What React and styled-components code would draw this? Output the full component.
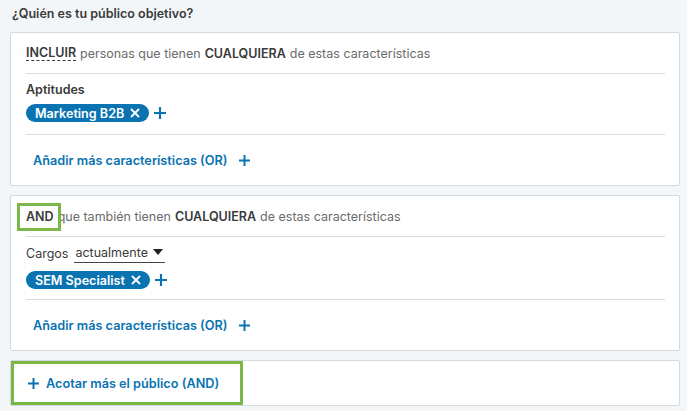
import React from "react";
import styled, { createGlobalStyle } from "styled-components";

const Global = createGlobalStyle`
  html, body { margin: 0; padding: 0; background: #f3f6f8; }
  body { font-family: Inter, "Liberation Sans", Arial, sans-serif; -webkit-font-smoothing: antialiased; }
`;

const Page = styled.div`
  width: 687px;
  height: 411px;
  box-sizing: border-box;
  padding: 6px 7px 0 10px;
  display: flex;
  flex-direction: column;
`;

const Title = styled.h2`
  margin: 0 0 10px 2px;
  font-size: 12.5px;
  font-weight: 600;
  color: #3a3a3a;
  line-height: 16px;
`;

const Card = styled.section`
  background: #fff;
  border: 1px solid #d6d9dc;
  border-radius: 2px;
  padding: ${(p) => p.$pad || "0 14px 0 15px"};
  margin-bottom: ${(p) => p.$mb || "9px"};
  display: flex;
  flex-direction: column;
`;

const Head = styled.div`
  height: 41px;
  display: flex;
  align-items: center;
  font-size: 12.5px;
  color: #6b6b6b;
  border-bottom: 1px solid #dcdcdc;
  box-sizing: border-box;
`;

const Strong = styled.b`
  color: #3a3a3a;
  font-weight: 600;
  margin: 0 4px;
`;

const Dashed = styled.span`
  color: #3a3a3a;
  font-weight: 600;
  margin-right: 4px;
  border-bottom: 1px dashed #3a3a3a;
  line-height: 15px;
`;

const Flagged = styled.span`
  position: relative;
  color: #3a3a3a;
  font-weight: 600;
  margin-right: 4px;
  &::after {
    content: "";
    position: absolute;
    left: -9px;
    right: -7px;
    top: -6px;
    bottom: -7px;
    border: 3px solid #7ab648;
  }
`;

const Group = styled.div`
  padding: 6px 0 ${(p) => p.$pb || "12px"};
  border-bottom: 1px solid #dcdcdc;
  display: flex;
  flex-direction: column;
  gap: ${(p) => p.$gap || "6px"};
`;

const Label = styled.div`
  display: flex;
  align-items: center;
  gap: 6px;
  font-size: 12.5px;
  font-weight: ${(p) => (p.$bold ? 600 : 400)};
  color: #3a3a3a;
  height: ${(p) => p.$h || "18px"};
`;

const Select = styled.span`
  display: inline-flex;
  align-items: center;
  justify-content: space-between;
  color: #3a3a3a;
  font-weight: 400;
  padding: 0 2px 2px 1px;
  border-bottom: 1px solid #444;
  width: 91px;
  box-sizing: border-box;
  line-height: 15px;
  margin-top: 1px;
`;

const Caret = styled.span`
  width: 0;
  height: 0;
  border-left: 5.5px solid transparent;
  border-right: 5.5px solid transparent;
  border-top: 6px solid #222;
`;

const ChipRow = styled.div`
  display: flex;
  align-items: center;
  gap: 5px;
`;

const Chip = styled.span`
  display: inline-flex;
  align-items: center;
  gap: 6px;
  height: 18px;
  padding: 0 9px 0 9px;
  border-radius: 9px;
  background: #0a73b1;
  color: #fff;
  font-size: 12.6px;
  font-weight: 600;
  svg { flex-shrink: 0; }
`;

const Icon = ({ size = 10, w = 1.8, color = "currentColor", kind }) => (
  <svg width={size} height={size} viewBox="0 0 10 10" fill="none" stroke={color} strokeWidth={w} strokeLinecap="butt">
    {kind === "x" ? (
      <path d="M1 1 L9 9 M9 1 L1 9" />
    ) : (
      <path d="M5 0 V10 M0 5 H10" />
    )}
  </svg>
);

const Plus = styled.span`
  color: #0a73b1;
  display: inline-flex;
`;

const AddLink = styled.div`
  height: 50px;
  display: flex;
  align-items: center;
  gap: 11px;
  padding-left: 7px;
  color: #0a73b1;
  font-size: 12.7px;
  font-weight: 600;
`;

const NarrowBtn = styled.div`
  width: 232px;
  height: 44px;
  box-sizing: border-box;
  border: 3px solid #7ab648;
  display: flex;
  align-items: center;
  gap: 7px;
  padding-left: 14px;
  color: #0a73b1;
  font-size: 12.7px;
  font-weight: 600;
`;

export default function App() {
  return (
    <>
      <Global />
      <Page>
        <Title>¿Quién es tu público objetivo?</Title>
        <Card>
          <Head>
            <Dashed>INCLUIR</Dashed>personas que tienen<Strong>CUALQUIERA</Strong>de estas características
          </Head>
          <Group>
            <Label $bold>Aptitudes</Label>
            <ChipRow>
              <Chip>Marketing B2B <Icon kind="x" size={10} w={1.9} /></Chip>
              <Plus><Icon size={12} /></Plus>
            </ChipRow>
          </Group>
          <AddLink>
            Añadir más características (OR) <Icon size={11} />
          </AddLink>
        </Card>
        <Card>
          <Head>
            <Flagged>AND</Flagged>que también tienen<Strong>CUALQUIERA</Strong>de estas características
          </Head>
          <Group $gap="8px" $pb="10px">
            <Label $h="20px">
              Cargos
              <Select>actualmente <Caret /></Select>
            </Label>
            <ChipRow>
              <Chip>SEM Specialist <Icon kind="x" size={10} w={1.9} /></Chip>
              <Plus><Icon size={12} /></Plus>
            </ChipRow>
          </Group>
          <AddLink>
            Añadir más características (OR) <Icon size={11} />
          </AddLink>
        </Card>
        <Card $pad="0" $mb="0">
          <NarrowBtn>
            <Icon size={11} /> Acotar más el público (AND)
          </NarrowBtn>
        </Card>
      </Page>
    </>
  );
}
